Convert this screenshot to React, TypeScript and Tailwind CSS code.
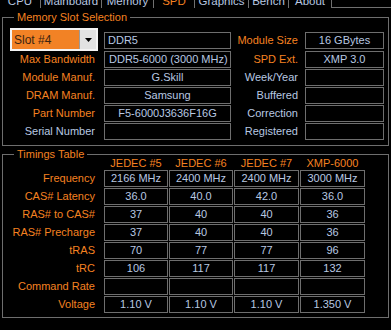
const tabs = [
  { name: 'CPU', cls: 'w-[41px] border-r' },
  { name: 'Mainboard', cls: 'w-[61px] border-r' },
  { name: 'Memory', cls: 'w-[51px]' },
  { name: 'SPD', cls: 'w-[42px] border-x' },
  { name: 'Graphics', cls: 'w-[54px] border-r' },
  { name: 'Bench', cls: 'w-[40px] border-r' },
  { name: 'About', cls: 'w-[43px] border-r' },
];

const memRows = [
  { left: 'Max Bandwidth', lo: true, value: 'DDR5-6000 (3000 MHz)', align: 'justify-start pl-[4px]', right: 'SPD Ext.', ro: true, rv: 'XMP 3.0' },
  { left: 'Module Manuf.', lo: true, value: 'G.Skill', align: 'justify-center', right: 'Week/Year', ro: false, rv: '' },
  { left: 'DRAM Manuf.', lo: true, value: 'Samsung', align: 'justify-center', right: 'Buffered', ro: false, rv: '' },
  { left: 'Part Number', lo: true, value: 'F5-6000J3636F16G', align: 'justify-center', right: 'Correction', ro: false, rv: '' },
  { left: 'Serial Number', lo: false, value: '', align: 'justify-center', right: 'Registered', ro: false, rv: '' },
];

const headers = ['JEDEC #5', 'JEDEC #6', 'JEDEC #7', 'XMP-6000'];

const timings = [
  { label: 'Frequency', v: ['2166 MHz', '2400 MHz', '2400 MHz', '3000 MHz'] },
  { label: 'CAS# Latency', v: ['36.0', '40.0', '42.0', '36.0'] },
  { label: 'RAS# to CAS#', v: ['37', '40', '40', '36'] },
  { label: 'RAS# Precharge', v: ['37', '40', '40', '36'] },
  { label: 'tRAS', v: ['70', '77', '77', '96'] },
  { label: 'tRC', v: ['106', '117', '117', '132'] },
  { label: 'Command Rate', v: ['', '', '', ''] },
  { label: 'Voltage', v: ['1.10 V', '1.10 V', '1.10 V', '1.350 V'] },
];

const Box = ({ children, className = '' }: { children?: React.ReactNode; className?: string }) => (
  <div className={`h-[17px] border border-[#6e6e6e] flex items-center text-[#b8c8e2] leading-none whitespace-nowrap ${className}`}>
    {children}
  </div>
);

const GroupTitle = ({ text }: { text: string }) => (
  <div className="ml-[11px] -mt-[8px] px-[3px] bg-black w-fit h-[14px] leading-[14px] text-[#f58220] text-[11px]">{text}</div>
);

export default function App() {
  return (
    <div
      className="w-[391px] h-[330px] bg-black overflow-hidden text-[11px] select-none"
      style={{ fontFamily: '"Liberation Sans", Arial, sans-serif' }}
    >
      {/* Tabs */}
      <div className="flex h-[15px] -mt-[7px]">
        {tabs.map((t) => (
          <div key={t.name} className={`${t.cls} border-[#707070] flex justify-center pt-[2px] leading-[13px] text-[#b8c8e2] text-[11.5px] whitespace-nowrap`}>
            <span className={t.name === 'SPD' ? 'text-[#f58220]' : ''}>{t.name}</span>
          </div>
        ))}
        <div className="flex-1 border-b border-[#707070]" />
      </div>

      {/* Memory Slot Selection */}
      <div className="ml-[2px] mt-[9px] w-[387px] border border-[#6e6e6e] pb-[5px]">
        <GroupTitle text="Memory Slot Selection" />
        <div className="flex h-[23px] mt-[4px]">
          <div className="ml-[7px] w-[88px] h-[23px] border-2 border-[#f4f4f4] flex">
            <div className="flex-1 bg-[#f28225] flex items-center pl-[2px] text-[#3a2412] text-[12px]">Slot #4</div>
            <div className="w-[17px] bg-[#e2e2e2] border-l border-[#9a9a9a] flex items-center justify-center">
              <svg width="7" height="4" viewBox="0 0 7 4">
                <path d="M0 0h7L3.5 4z" fill="#000" />
              </svg>
            </div>
          </div>
          <Box className="ml-[6px] w-[127px] mt-[4px] justify-start pl-[3px]">DDR5</Box>
          <div className="w-[67px] h-[17px] mt-[4px] flex items-center justify-end text-[#f58220]">Module Size</div>
          <Box className="ml-[7px] w-[79px] mt-[4px] justify-center">16 GBytes</Box>
        </div>
        <div className="flex flex-col gap-[1px]">
          {memRows.map((r) => (
            <div key={r.left} className="flex h-[17px]">
              <div className={`w-[92px] flex items-center justify-end ${r.lo ? 'text-[#f58220]' : 'text-[#b8c8e2]'}`}>{r.left}</div>
              <Box className={`ml-[9px] w-[127px] ${r.align}`}>{r.value}</Box>
              <div className={`w-[67px] flex items-center justify-end ${r.ro ? 'text-[#f58220]' : 'text-[#b8c8e2]'}`}>{r.right}</div>
              <Box className="ml-[7px] w-[79px] justify-center">{r.rv}</Box>
            </div>
          ))}
        </div>
      </div>

      {/* Timings Table */}
      <div className="ml-[2px] mt-[8px] w-[387px] border border-[#6e6e6e] pb-[4px]">
        <GroupTitle text="Timings Table" />
        <div className="flex h-[13px] -mt-[4px]">
          <div className="w-[92px]" />
          <div className="ml-[9px] grid grid-cols-[64px_64px_65px_65px] gap-[1px]">
            {headers.map((h) => (
              <div key={h} className="flex items-center justify-center text-[#f58220] leading-none">{h}</div>
            ))}
          </div>
        </div>
        <div className="flex flex-col gap-[1px]">
          {timings.map((t) => (
            <div key={t.label} className="flex h-[17px]">
              <div className="w-[92px] flex items-center justify-end text-[#f58220]">{t.label}</div>
              <div className="ml-[9px] grid grid-cols-[64px_64px_65px_65px] gap-[1px]">
                {t.v.map((v, i) => (
                  <Box key={i} className="justify-center">{v}</Box>
                ))}
              </div>
            </div>
          ))}
        </div>
      </div>
    </div>
  );
}
